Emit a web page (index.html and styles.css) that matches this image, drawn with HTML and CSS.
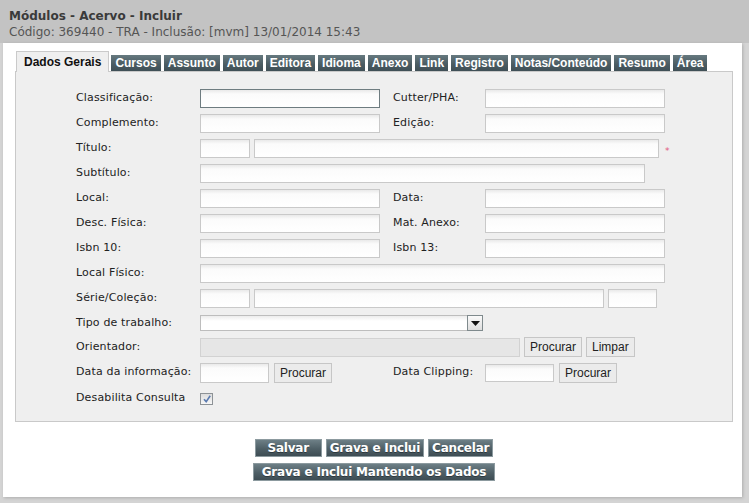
FILE: index.html
```html
<!DOCTYPE html>
<html lang="pt">
<head>
<meta charset="utf-8">
<title>Módulos - Acervo - Incluir</title>
<link rel="stylesheet" href="styles.css">
</head>
<body>
<div class="header">
  <div class="title">Módulos - Acervo - Incluir</div>
  <div class="subtitle">Código: 369440 - TRA - Inclusão: [mvm] 13/01/2014 15:43</div>
</div>
<div class="sheet">
  <div class="tabs">
    <span class="tab active">Dados Gerais</span>
    <span class="tab">Cursos</span>
    <span class="tab">Assunto</span>
    <span class="tab">Autor</span>
    <span class="tab">Editora</span>
    <span class="tab">Idioma</span>
    <span class="tab">Anexo</span>
    <span class="tab">Link</span>
    <span class="tab">Registro</span>
    <span class="tab">Notas/Conteúdo</span>
    <span class="tab">Resumo</span>
    <span class="tab">Área</span>
  </div>
  <div class="panel">
    <div class="row">
      <span class="lbl">Classificação:</span>
      <input class="inp w180 focus" type="text">
      <span class="lbl2">Cutter/PHA:</span>
      <input class="inp w180" type="text">
    </div>
    <div class="row">
      <span class="lbl">Complemento:</span>
      <input class="inp w180" type="text">
      <span class="lbl2">Edição:</span>
      <input class="inp w180" type="text">
    </div>
    <div class="row">
      <span class="lbl">Título:</span>
      <input class="inp w50" type="text">
      <input class="inp w405 gap" type="text">
      <span class="req">*</span>
    </div>
    <div class="row">
      <span class="lbl">Subtítulo:</span>
      <input class="inp w445" type="text">
    </div>
    <div class="row">
      <span class="lbl">Local:</span>
      <input class="inp w180" type="text">
      <span class="lbl2">Data:</span>
      <input class="inp w180" type="text">
    </div>
    <div class="row">
      <span class="lbl">Desc. Física:</span>
      <input class="inp w180" type="text">
      <span class="lbl2">Mat. Anexo:</span>
      <input class="inp w180" type="text">
    </div>
    <div class="row">
      <span class="lbl">Isbn 10:</span>
      <input class="inp w180" type="text">
      <span class="lbl2">Isbn 13:</span>
      <input class="inp w180" type="text">
    </div>
    <div class="row">
      <span class="lbl">Local Físico:</span>
      <input class="inp w465" type="text">
    </div>
    <div class="row">
      <span class="lbl">Série/Coleção:</span>
      <input class="inp w50" type="text">
      <input class="inp w350 gap" type="text">
      <input class="inp w49 gap" type="text">
    </div>
    <div class="row r24">
      <span class="lbl">Tipo de trabalho:</span>
      <span class="select">
        <span class="select-val"></span>
        <span class="select-arrow"><svg width="9" height="5" viewBox="0 0 9 5"><path d="M0 0H9L4.5 5Z" fill="#111"/></svg></span>
      </span>
    </div>
    <div class="row r24">
      <span class="lbl">Orientador:</span>
      <input class="inp w320 disabled" type="text" disabled>
      <button class="btn gap" type="button">Procurar</button>
      <button class="btn gap" type="button">Limpar</button>
    </div>
    <div class="row r28">
      <span class="lbl up">Data da informação:</span>
      <span class="group">
        <input class="inp w69 h20" type="text">
        <button class="btn gap5" type="button">Procurar</button>
      </span>
      <span class="lbl2 up">Data Clipping:</span>
      <input class="inp w69 h18" type="text">
      <button class="btn gap5" type="button">Procurar</button>
    </div>
    <div class="row r23">
      <span class="lbl">Desabilita Consulta</span>
      <span class="check"><svg width="10" height="10" viewBox="0 0 10 10"><path d="M2 5.2L4.2 7.6L8.2 1.8" fill="none" stroke="#5b7bb0" stroke-width="1.6"/></svg></span>
    </div>
  </div>
  <div class="actions">
    <div class="act-row">
      <button class="abtn salvar" type="button">Salvar</button>
      <button class="abtn" type="button">Grava e Inclui</button>
      <button class="abtn" type="button">Cancelar</button>
    </div>
    <div class="act-row">
      <button class="abtn wide" type="button">Grava e Inclui Mantendo os Dados</button>
    </div>
  </div>
</div>
</body>
</html>
```
FILE: styles.css
```css
html, body {
  margin: 0;
  padding: 0;
}
body {
  width: 749px;
  height: 503px;
  overflow: hidden;
  background: #d4d4d4;
  font-family: "DejaVu Sans", Verdana, sans-serif;
  color: #222;
}
.header {
  height: 43px;
  box-sizing: border-box;
  padding: 9px 0 0 9px;
  background: #c3c3c3;
}
.title {
  font-size: 12px;
  line-height: 15px;
  font-weight: bold;
  color: #3a3a3a;
}
.subtitle {
  margin-top: 1px;
  font-size: 12px;
  line-height: 15px;
  color: #555;
}
.sheet {
  margin: 0 7px 0 3px;
  padding: 8px 9px 16px 12px;
  background: #fff;
  box-shadow: 1px 1px 3px rgba(0,0,0,0.18);
}
.tabs {
  display: flex;
  align-items: flex-end;
  gap: 3px;
  height: 20px;
  margin-left: 1px;
  font-family: "Liberation Sans", Arial, sans-serif;
  font-size: 12px;
  font-weight: bold;
}
.tab {
  height: 16px;
  line-height: 16px;
  padding: 0 4px;
  color: #fff;
  background: linear-gradient(#66797f, #4a5b62 60%, #3f4f56);
  white-space: nowrap;
}
.tab.active {
  position: relative;
  z-index: 1;
  box-sizing: border-box;
  line-height: 20px;
  padding: 0 7px;
  margin-right: -1px;
  margin-bottom: -1px;
  height: 21px;
  color: #111;
  background: #efefef;
  border: 1px solid #cacaca;
  border-bottom: none;
}
.panel {
  border: 1px solid #c9c9c9;
  background: #efefef;
  padding: 14px 0 11px 60px;
}
.row {
  display: flex;
  align-items: center;
  height: 25px;
  font-size: 11px;
}
.row.r24 { height: 24px; }
.row.r28 { height: 28px; }
.row.r23 { height: 23px; }
.lbl {
  width: 124px;
  flex: none;
  white-space: nowrap;
  letter-spacing: 0.15px;
  position: relative;
  top: -1px;
}
.lbl2 {
  width: 92px;
  flex: none;
  margin-left: 13px;
  white-space: nowrap;
  letter-spacing: 0.15px;
  position: relative;
  top: -1px;
}
.lbl.up, .lbl2.up {
  top: -2px;
}
.group {
  display: flex;
  align-items: center;
  width: 180px;
  flex: none;
}
.inp {
  box-sizing: border-box;
  height: 19px;
  margin: 0;
  padding: 0 3px;
  border: 1px solid #c9c9c9;
  background: linear-gradient(#e9e9e9, #fbfbfb 4px, #fff);
  font: 11px "DejaVu Sans", Verdana, sans-serif;
  flex: none;
  outline: none;
}
.inp.focus { border-color: #6e7c80; }
.inp.disabled {
  background: #e6e6e6;
  border-color: #d2d2d2;
}
.inp.h20 { height: 20px; }
.inp.h18 { height: 18px; }
.w180 { width: 180px; }
.w50 { width: 50px; }
.w49 { width: 49px; }
.w405 { width: 405px; }
.w445 { width: 445px; }
.w465 { width: 465px; }
.w350 { width: 350px; }
.w320 { width: 320px; }
.w69 { width: 69px; }
.gap { margin-left: 4px; }
.gap5 { margin-left: 5px; }
.req {
  margin-left: 6px;
  font-size: 9px;
  color: #e2577e;
  position: relative;
  top: 2px;
}
.select {
  display: flex;
  width: 283px;
  height: 16px;
  box-sizing: border-box;
  border: 1px solid #bdbdbd;
  background: linear-gradient(#ececec, #fff 5px);
}
.select-val {
  flex: 1;
}
.select-arrow {
  width: 16px;
  box-sizing: border-box;
  border: 1px solid #7f8a8d;
  margin: -1px -1px -1px 0;
  height: 16px;
  display: flex;
  align-items: center;
  justify-content: center;
  background: linear-gradient(#fafafa, #dedede);
}
.btn {
  box-sizing: border-box;
  height: 20px;
  margin-top: 0;
  margin-bottom: 0;
  padding: 0 5px;
  border: 1px solid #c6c6c6;
  background: #ebebeb;
  font: 12px "Liberation Sans", Arial, sans-serif;
  color: #222;
  flex: none;
  cursor: pointer;
}
.check {
  width: 13px;
  height: 12px;
  box-sizing: border-box;
  border: 1px solid #8d9296;
  background: linear-gradient(#dcdcdc, #f7f7f7);
  display: flex;
  align-items: center;
  justify-content: center;
}
.actions {
  margin-top: 17px;
  display: flex;
  flex-direction: column;
  align-items: center;
  gap: 6px;
}
.act-row {
  display: flex;
  gap: 4px;
}
.abtn {
  box-sizing: border-box;
  height: 18px;
  margin: 0;
  padding: 0 3px;
  border: 1px solid #8c9a9f;
  background: linear-gradient(#6d7f86, #4e5f66 55%, #3e4d54);
  color: #fff;
  font: bold 12px "DejaVu Sans", Verdana, sans-serif;
  letter-spacing: -0.2px;
  line-height: 16px;
  text-shadow: 0 1px 0 rgba(0,0,0,0.35);
  cursor: pointer;
}
.abtn.salvar { width: 67px; }
.abtn.wide { padding: 0 8px; }
```
